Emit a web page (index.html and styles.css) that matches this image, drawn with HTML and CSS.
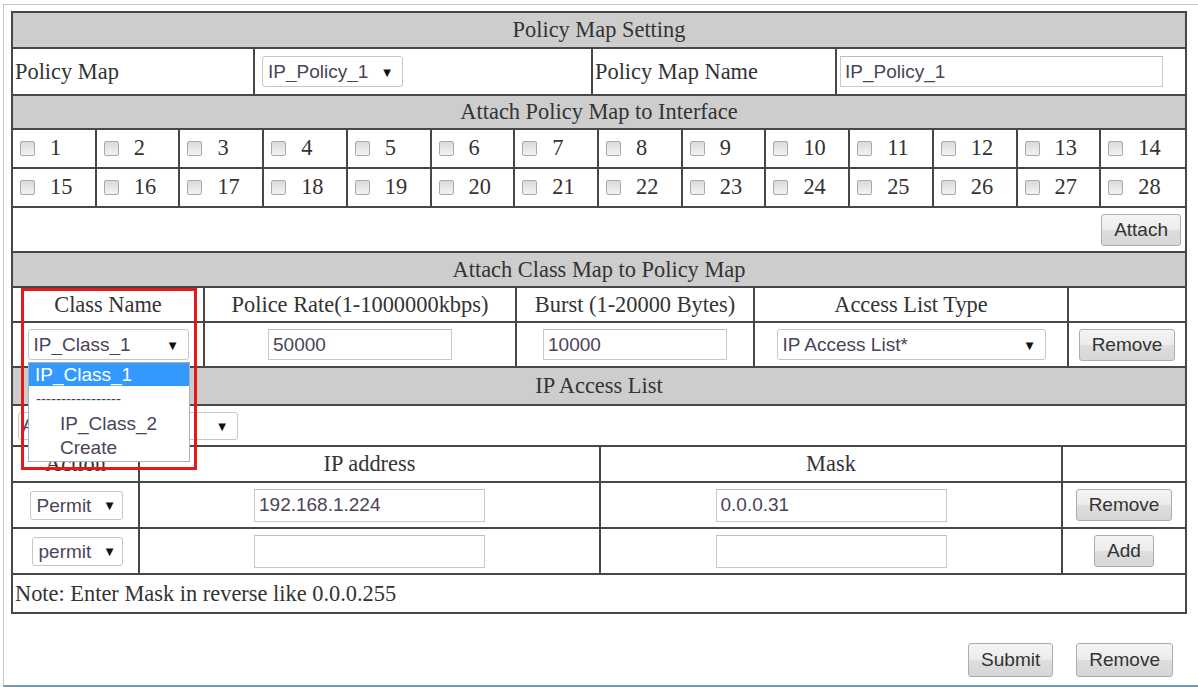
FILE: index.html
```html
<!DOCTYPE html>
<html>
<head>
<meta charset="utf-8">
<title>Policy Map Setting</title>
<link rel="stylesheet" href="styles.css">
</head>
<body>
<div class="frame">
  <div class="tbl">
    <div class="row head r-title">Policy Map Setting</div>

    <div class="row cols-pm r-pm">
      <div class="cell lbl">Policy Map</div>
      <div class="cell pad7"><span class="sel s-policy"><select><option>IP_Policy_1</option></select></span></div>
      <div class="cell lbl">Policy Map Name</div>
      <div class="cell pad3"><input class="txt t-name" type="text" value="IP_Policy_1"></div>
    </div>

    <div class="row head r-sub">Attach Policy Map to Interface</div>

    <div class="row cols-cb r-cb">
      <label class="cell cb"><input type="checkbox"><span>1</span></label>
      <label class="cell cb"><input type="checkbox"><span>2</span></label>
      <label class="cell cb"><input type="checkbox"><span>3</span></label>
      <label class="cell cb"><input type="checkbox"><span>4</span></label>
      <label class="cell cb"><input type="checkbox"><span>5</span></label>
      <label class="cell cb"><input type="checkbox"><span>6</span></label>
      <label class="cell cb"><input type="checkbox"><span>7</span></label>
      <label class="cell cb"><input type="checkbox"><span>8</span></label>
      <label class="cell cb"><input type="checkbox"><span>9</span></label>
      <label class="cell cb"><input type="checkbox"><span>10</span></label>
      <label class="cell cb"><input type="checkbox"><span>11</span></label>
      <label class="cell cb"><input type="checkbox"><span>12</span></label>
      <label class="cell cb"><input type="checkbox"><span>13</span></label>
      <label class="cell cb"><input type="checkbox"><span>14</span></label>
    </div>
    <div class="row cols-cb r-cb">
      <label class="cell cb"><input type="checkbox"><span>15</span></label>
      <label class="cell cb"><input type="checkbox"><span>16</span></label>
      <label class="cell cb"><input type="checkbox"><span>17</span></label>
      <label class="cell cb"><input type="checkbox"><span>18</span></label>
      <label class="cell cb"><input type="checkbox"><span>19</span></label>
      <label class="cell cb"><input type="checkbox"><span>20</span></label>
      <label class="cell cb"><input type="checkbox"><span>21</span></label>
      <label class="cell cb"><input type="checkbox"><span>22</span></label>
      <label class="cell cb"><input type="checkbox"><span>23</span></label>
      <label class="cell cb"><input type="checkbox"><span>24</span></label>
      <label class="cell cb"><input type="checkbox"><span>25</span></label>
      <label class="cell cb"><input type="checkbox"><span>26</span></label>
      <label class="cell cb"><input type="checkbox"><span>27</span></label>
      <label class="cell cb"><input type="checkbox"><span>28</span></label>
    </div>

    <div class="row r-attach"><button class="btn">Attach</button></div>

    <div class="row head r-sub2">Attach Class Map to Policy Map</div>

    <div class="row cols-cm r-cmh">
      <div class="cell ctr">Class Name</div>
      <div class="cell ctr">Police Rate(1-1000000kbps)</div>
      <div class="cell ctr">Burst (1-20000 Bytes)</div>
      <div class="cell ctr">Access List Type</div>
      <div class="cell ctr"></div>
    </div>

    <div class="row cols-cm r-cmi">
      <div class="cell ctr"><span class="sel s-class"><select><option>IP_Class_1</option></select></span></div>
      <div class="cell ctr"><input class="txt t-rate" type="text" value="50000"></div>
      <div class="cell ctr"><input class="txt t-rate" type="text" value="10000"></div>
      <div class="cell ctr"><span class="sel s-type"><select><option>IP Access List*</option></select></span></div>
      <div class="cell ctr"><button class="btn">Remove</button></div>
    </div>

    <div class="row head r-sub3">IP Access List</div>

    <div class="row r-acl"><span class="sel s-acl"><select><option>ACL_1</option></select></span></div>

    <div class="row cols-ip r-iph">
      <div class="cell ctr">Action</div>
      <div class="cell ctr">IP address</div>
      <div class="cell ctr">Mask</div>
      <div class="cell ctr"></div>
    </div>

    <div class="row cols-ip r-ip">
      <div class="cell ctr"><span class="sel s-act"><select><option>Permit</option></select></span></div>
      <div class="cell ctr"><input class="txt t-ip" type="text" value="192.168.1.224"></div>
      <div class="cell ctr"><input class="txt t-ip" type="text" value="0.0.0.31"></div>
      <div class="cell ctr"><button class="btn">Remove</button></div>
    </div>

    <div class="row cols-ip r-ip">
      <div class="cell ctr"><span class="sel s-act s-act2"><select><option>permit</option></select></span></div>
      <div class="cell ctr"><input class="txt t-ip" type="text" value=""></div>
      <div class="cell ctr"><input class="txt t-ip" type="text" value=""></div>
      <div class="cell ctr"><button class="btn">Add</button></div>
    </div>

    <div class="row r-note">Note: Enter Mask in reverse like 0.0.0.255</div>
  </div>

  <div class="actions">
    <button class="btn btn-lg">Submit</button>
    <button class="btn btn-lg">Remove</button>
  </div>
</div>

<div class="popup">
  <div class="opt on">IP_Class_1</div>
  <div class="opt sep">-----------------</div>
  <div class="opt ind">IP_Class_2</div>
  <div class="opt ind">Create</div>
</div>
<div class="mark"></div>
</body>
</html>
```

FILE: styles.css
```css
* { box-sizing: border-box; }

html, body {
  margin: 0;
  padding: 0;
  background: #ffffff;
}

body {
  width: 1198px;
  height: 687px;
  overflow: hidden;
  position: relative;
  font-family: "Liberation Serif", "Times New Roman", serif;
  color: #333333;
}

.frame {
  margin: 4px 0 0 3px;
  height: 683px;
  border-top: 1px solid #b7cad8;
  border-left: 1px solid #b7cad8;
  border-bottom: 2px solid #7896ad;
  padding: 6px 0 0 7px;
}

.tbl {
  width: 1176px;
  border: 2px solid #474747;
}

.row {
  display: grid;
  border-bottom: 2px solid #474747;
  font-size: 22.4px;
}
.row:last-child { border-bottom: none; }

.head {
  background: #cdcdcd;
  display: flex;
  align-items: center;
  justify-content: center;
}

.cell {
  border-right: 2px solid #474747;
  display: flex;
  align-items: center;
  min-width: 0;
}
.cell:last-child { border-right: none; }

.lbl { padding-left: 2px; }
.pad7 { padding-left: 7px; }
.pad3 { padding-left: 3px; }
.ctr { justify-content: center; }

/* row heights */
.r-title { height: 36px; }
.r-pm { height: 47px; }
.r-sub { height: 34px; }
.r-cb { height: 39px; }
.r-attach { height: 45px; display: flex; align-items: center; justify-content: flex-end; padding-right: 4px; }
.r-sub2 { height: 35px; }
.r-cmh { height: 35px; }
.r-cmi { height: 45px; }
.r-sub3 { height: 38px; }
.r-acl { height: 41px; display: flex; align-items: center; padding-left: 5px; }
.r-iph { height: 36px; }
.r-ip { height: 46px; }
.r-note { height: 37px; display: flex; align-items: center; padding-left: 2px; }

/* column sets */
.cols-pm { grid-template-columns: 242px 338px 244px 348px; }
.cols-cb { grid-template-columns: repeat(14, 1fr); }
.cols-cm { grid-template-columns: 192px 312px 238px 314px 116px; }
.cols-ip { grid-template-columns: 127px 461px 462px 122px; }

/* checkboxes */
.cb {
  padding-left: 7px;
  gap: 15px;
}
.cb input {
  appearance: none;
  -webkit-appearance: none;
  width: 15px;
  height: 15px;
  margin: 0;
  border: 1px solid #a9a9a9;
  border-radius: 2px;
  background: linear-gradient(#d9d9d9, #f3f3f3);
}
.cb span { line-height: 1; }

/* text inputs */
.txt {
  font-family: "Liberation Sans", Arial, sans-serif;
  font-size: 19px;
  color: #4a4458;
  height: 31px;
  border: 1px solid #c9c9c9;
  border-top-color: #bdbdbd;
  background: #ffffff;
  padding: 0 4px;
  margin: 0;
  outline: none;
}
.t-name { width: 323px; }
.t-rate { width: 184px; }
.t-ip { width: 231px; height: 33px; }

/* selects */
.sel {
  position: relative;
  display: inline-block;
}
.sel select {
  appearance: none;
  -webkit-appearance: none;
  width: 100%;
  height: 31px;
  font-family: "Liberation Sans", Arial, sans-serif;
  font-size: 19px;
  color: #4a4458;
  background: #ffffff;
  border: 1px solid #c6c6c6;
  border-radius: 3px;
  padding: 0 24px 0 5px;
  margin: 0;
  outline: none;
}
.sel::after {
  content: "\25BC";
  position: absolute;
  top: 50%;
  transform: translateY(-50%);
  right: 12px;
  font-family: "DejaVu Sans", sans-serif;
  font-size: 10px;
  color: #111111;
  pointer-events: none;
}
.s-policy { width: 141px; }
.s-class { width: 161px; }
.s-type { width: 269px; }
.s-acl { width: 220px; }
.s-acl select { height: 28px; padding-left: 3px; }
.s-act { width: 93px; margin-left: 1px; }
.s-act select { height: 29px; padding-left: 6px; }
.s-act::after { right: 9px; }
.s-act2 { width: 91px; margin-left: 3px; }

/* buttons */
.btn {
  font-family: "Liberation Sans", Arial, sans-serif;
  font-size: 19px;
  color: #333333;
  height: 32px;
  padding: 0 12px;
  margin: 0;
  border: 1px solid #adadad;
  border-radius: 3px;
  background: linear-gradient(#f4f4f4 0%, #ececec 50%, #dedede 51%, #d6d6d6 100%);
}
.btn-lg { height: 34px; }

.actions {
  width: 1176px;
  display: flex;
  justify-content: flex-end;
  gap: 23px;
  padding-right: 14px;
  margin-top: 29px;
}

/* open dropdown list (overlay) */
.popup {
  position: absolute;
  left: 28px;
  top: 362px;
  width: 162px;
  height: 100px;
  background: #ffffff;
  border: 1px solid #a7b0bc;
  font-family: "Liberation Sans", Arial, sans-serif;
  font-size: 19px;
  color: #4a4458;
}
.opt {
  height: 24px;
  line-height: 24px;
  padding-left: 6px;
  white-space: nowrap;
}
.opt.on {
  height: 23px;
  line-height: 23px;
  background: #3399ff;
  color: #ffffff;
}
.opt.sep {
  height: 26px;
  line-height: 26px;
  font-size: 15px;
  padding-left: 7px;
}
.opt.ind { padding-left: 31px; }

/* red annotation box */
.mark {
  position: absolute;
  left: 21px;
  top: 288px;
  width: 176px;
  height: 182px;
  border: 3px solid #e11b1b;
}
```
